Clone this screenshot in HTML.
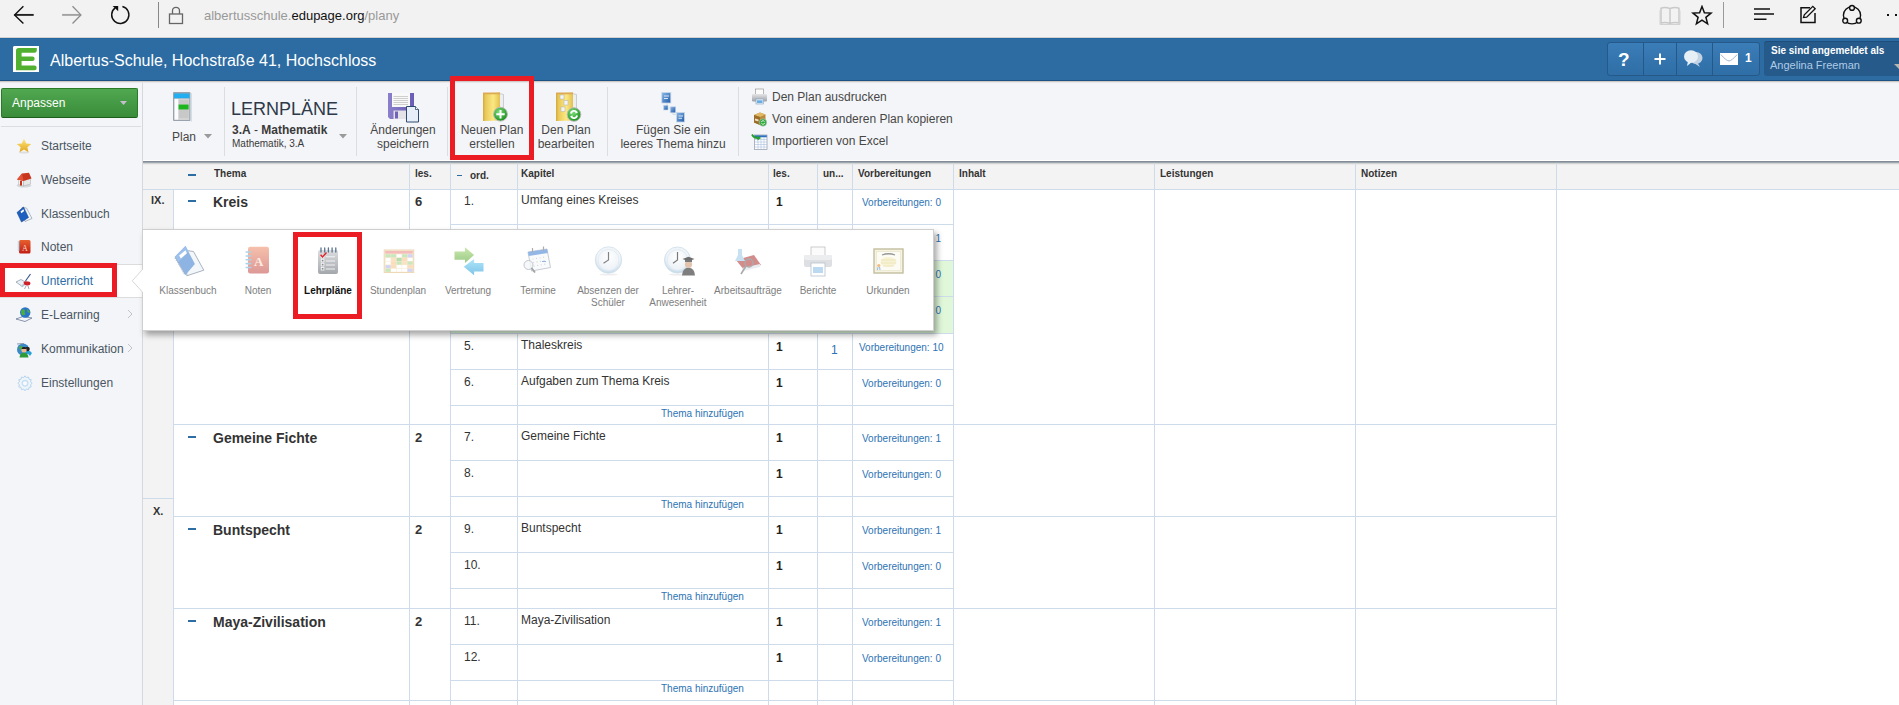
<!DOCTYPE html><html><head><meta charset="utf-8"><style>
html,body{margin:0;padding:0;}
body{width:1899px;height:705px;overflow:hidden;position:relative;background:#fff;font-family:"Liberation Sans",sans-serif;}
div{box-sizing:border-box;}
.t{position:absolute;white-space:nowrap;line-height:1;}
</style></head><body>
<div style="position:absolute;left:0px;top:0px;width:1899px;height:37px;background:#f2f2f2;"></div>
<svg style="position:absolute;left:12px;top:5px" width="24" height="22" viewBox="0 0 24 22"><path d="M2.5 9.9H21.7" stroke="#222" stroke-width="1.9"/><path d="M11.4 1.2L2.6 9.9L11.4 18.5" fill="none" stroke="#111" stroke-width="1.4"/></svg>
<svg style="position:absolute;left:60px;top:5px" width="24" height="22" viewBox="0 0 24 22"><path d="M2.1 9.9H20.5" stroke="#a2a2a2" stroke-width="1.9"/><path d="M12.5 1.2L20.9 9.9L12.5 18.5" fill="none" stroke="#8c8c8c" stroke-width="1.3"/></svg>
<svg style="position:absolute;left:109px;top:4px" width="22" height="22" viewBox="0 0 22 22"><path d="M13.4 2.5A8.6 8.6 0 1 1 6.2 3.9" fill="none" stroke="#111" stroke-width="1.45"/><path d="M3.6 2.1H9.2V7.2Z" fill="#111"/></svg>
<div style="position:absolute;left:158px;top:2px;width:1px;height:26px;background:#888;"></div>
<svg style="position:absolute;left:168px;top:5px" width="17" height="20" viewBox="0 0 17 20"><rect x="1.5" y="9" width="13" height="9.5" fill="none" stroke="#666" stroke-width="1.3"/><path d="M4.5 9V5.8a3.5 3.5 0 0 1 7 0V9" fill="none" stroke="#666" stroke-width="1.3"/></svg>
<div style="position:absolute;left:204px;top:8px;white-space:nowrap;font-size:13px;line-height:15px;"><span style="color:#999">albertusschule.</span><span style="color:#111">edupage.org</span><span style="color:#999">/plany</span></div>
<svg style="position:absolute;left:1659px;top:5px" width="22" height="21" viewBox="0 0 22 21"><path d="M2 3.2Q6 1.8 11 3.5Q16 1.8 20 3.2V18Q16 16.8 11 18.3Q6 16.8 2 18Z M11 3.5V18.3" fill="none" stroke="#c9c9c9" stroke-width="1.5"/><path d="M1 5.5V19.5H21V5.5" fill="none" stroke="#d2d2d2" stroke-width="1"/></svg>
<svg style="position:absolute;left:1691px;top:5px" width="22" height="21" viewBox="0 0 22 21"><path d="M11 1.5L13.4 7.8L20 8.1L14.9 12.3L16.6 18.9L11 15.2L5.4 18.9L7.1 12.3L2 8.1L8.6 7.8Z" fill="none" stroke="#111" stroke-width="1.5" stroke-linejoin="miter"/></svg>
<div style="position:absolute;left:1723px;top:2px;width:1px;height:26px;background:#999;"></div>
<svg style="position:absolute;left:1753px;top:6px" width="22" height="16" viewBox="0 0 22 16"><path d="M1 3H17 M1 8H21 M1 13.2H13.5" fill="none" stroke="#111" stroke-width="1.4"/></svg>
<svg style="position:absolute;left:1799px;top:5px" width="19" height="19" viewBox="0 0 19 19"><path d="M11 2.8H2V17.5H16V8" fill="none" stroke="#111" stroke-width="1.5"/><path d="M4.5 12.5L5.3 9.8L13.8 1.3L16.2 3.7L7.7 12.2Z" fill="none" stroke="#111" stroke-width="1.3"/></svg>
<svg style="position:absolute;left:1840px;top:3px" width="24" height="24" viewBox="0 0 24 24"><circle cx="12" cy="12.3" r="8.6" fill="none" stroke="#111" stroke-width="1.4"/><circle cx="12" cy="4.9" r="2.4" fill="#f2f2f2" stroke="#111" stroke-width="1.4"/><circle cx="5.2" cy="17.7" r="2.4" fill="#f2f2f2" stroke="#111" stroke-width="1.4"/><circle cx="18.8" cy="17.7" r="2.4" fill="#f2f2f2" stroke="#111" stroke-width="1.4"/></svg>
<div style="position:absolute;left:1887px;top:14px;width:2px;height:2px;background:#111;"></div>
<div style="position:absolute;left:1895px;top:14px;width:2px;height:2px;background:#111;"></div>
<div style="position:absolute;left:0px;top:38px;width:1899px;height:43px;background:#2c6ca2;border-bottom:1px solid #1b5082;"></div>
<div style="position:absolute;left:0px;top:37px;width:1899px;height:1px;background:#d4d0cc;"></div>
<div style="position:absolute;left:0px;top:38px;width:1899px;height:1px;background:#2467a1;"></div>
<svg style="position:absolute;left:13px;top:46px" width="26" height="26" viewBox="0 0 26 26"><path d="M1 0H26V26H0V1Z" fill="#fff"/><path d="M5.5 2H23.8V4.4A2.4 2.4 0 0 1 21.4 6.8H8.6V10.5H19.4A2.25 2.25 0 0 1 19.4 15H8.6V19.6H21.4A2.3 2.3 0 0 1 21.4 24.2H3V4.5A2.5 2.5 0 0 1 5.5 2Z" fill="#52b030"/></svg>
<div style="position:absolute;left:50px;top:52px;white-space:nowrap;font-size:16px;line-height:18px;color:#fff;">Albertus-Schule, Hochstraße 41, Hochschloss</div>
<div style="position:absolute;left:1607px;top:42px;width:153px;height:34px;background:linear-gradient(#3b7db8,#2f6ea6);border:1px solid #25598a;border-radius:3px;"></div>
<div style="position:absolute;left:1643px;top:43px;width:1px;height:32px;background:#245888;"></div>
<div style="position:absolute;left:1676px;top:43px;width:1px;height:32px;background:#245888;"></div>
<div style="position:absolute;left:1712px;top:43px;width:1px;height:32px;background:#245888;"></div>
<div style="position:absolute;left:1618px;top:49px;white-space:nowrap;font-size:19px;font-weight:bold;color:#fff;line-height:22px;">?</div>
<svg style="position:absolute;left:1654px;top:53px" width="12" height="12" viewBox="0 0 12 12"><path d="M6 0.5V11.5 M0.5 6H11.5" stroke="#fff" stroke-width="2"/></svg>
<svg style="position:absolute;left:1683px;top:49px" width="21" height="20" viewBox="0 0 21 20"><ellipse cx="13" cy="9" rx="6.5" ry="6" fill="#c3d3e4"/><path d="M14 13L17 18L11 14Z" fill="#c3d3e4"/><ellipse cx="8" cy="7.5" rx="7" ry="6.3" fill="#e6eef6"/><path d="M5 12L4 17L9 13Z" fill="#e6eef6"/></svg>
<svg style="position:absolute;left:1720px;top:53px" width="18" height="12" viewBox="0 0 18 12"><rect x="0" y="0" width="18" height="12" fill="#fff"/><path d="M0.8 1.5Q6 7.5 9 8Q12 7.5 17.2 1.5" fill="none" stroke="#8fb0d0" stroke-width="0.9"/></svg>
<div style="position:absolute;left:1745px;top:52px;white-space:nowrap;font-size:12px;font-weight:bold;color:#fff;line-height:12px;">1</div>
<div style="position:absolute;left:1764px;top:41px;width:140px;height:35px;background:#255a8b;border-top:1px solid #1d4e7c;border-radius:3px;"></div>
<div style="position:absolute;left:1771px;top:45px;white-space:nowrap;font-size:10px;font-weight:bold;color:#fff;line-height:12px;">Sie sind angemeldet als</div>
<div style="position:absolute;left:1770px;top:59px;white-space:nowrap;font-size:11px;color:#afcbe6;line-height:13px;">Angelina Freeman</div>
<svg style="position:absolute;left:1894px;top:64px" width="10" height="6" viewBox="0 0 10 6"><path d="M0 0H10L5 5Z" fill="#b4b4b0"/></svg>
<div style="position:absolute;left:0px;top:81px;width:143px;height:624px;background:#f4f5f8;border-right:1px solid #d6d7da;"></div>
<div style="position:absolute;left:1px;top:88px;width:137px;height:30px;background:linear-gradient(#50a850,#3a8c3a);border:1px solid #2a7a2a;border-bottom-color:#1a5e1a;border-radius:2px;"></div>
<div style="position:absolute;left:12px;top:96px;white-space:nowrap;font-size:12px;color:#fff;line-height:14px;">Anpassen</div>
<svg style="position:absolute;left:120px;top:101px" width="7" height="4" viewBox="0 0 7 4"><path d="M0 0H7L3.5 4Z" fill="#c6bece"/></svg>
<div style="position:absolute;left:1px;top:126px;width:140px;height:1px;background:#dcdde2;"></div>
<div style="position:absolute;left:143px;top:81px;width:1756px;height:79px;background:#f4f5f8;"></div>
<div style="position:absolute;left:143px;top:160px;width:1756px;height:1px;background:#fff;"></div>
<div style="position:absolute;left:0px;top:81px;width:1899px;height:1px;background:#ccc9c7;"></div>
<div style="position:absolute;left:0px;top:82px;width:1899px;height:1px;background:#e7e7e9;"></div>
<div style="position:absolute;left:143px;top:161px;width:1756px;height:1px;background:#838b95;"></div>
<div style="position:absolute;left:143px;top:162px;width:1756px;height:1px;background:#9ba7b1;"></div>
<div style="position:absolute;left:41px;top:139px;white-space:nowrap;font-size:12px;line-height:14px;color:#4a5563;">Startseite</div>
<div style="position:absolute;left:41px;top:173px;white-space:nowrap;font-size:12px;line-height:14px;color:#4a5563;">Webseite</div>
<div style="position:absolute;left:41px;top:207px;white-space:nowrap;font-size:12px;line-height:14px;color:#4a5563;">Klassenbuch</div>
<div style="position:absolute;left:41px;top:240px;white-space:nowrap;font-size:12px;line-height:14px;color:#4a5563;">Noten</div>
<div style="position:absolute;left:0px;top:264px;width:142px;height:34px;background:#fff;border-top:1px solid #dcdcdc;border-bottom:1px solid #dcdcdc;"></div>
<div style="position:absolute;left:41px;top:274px;white-space:nowrap;font-size:12px;line-height:14px;color:#2e6da4;">Unterricht</div>
<div style="position:absolute;left:41px;top:308px;white-space:nowrap;font-size:12px;line-height:14px;color:#4a5563;">E-Learning</div>
<svg style="position:absolute;left:127px;top:309px" width="6" height="10" viewBox="0 0 6 10"><path d="M1 1L5 5L1 9" fill="none" stroke="#c0c4ca" stroke-width="1"/></svg>
<div style="position:absolute;left:41px;top:342px;white-space:nowrap;font-size:12px;line-height:14px;color:#4a5563;">Kommunikation</div>
<svg style="position:absolute;left:127px;top:343px" width="6" height="10" viewBox="0 0 6 10"><path d="M1 1L5 5L1 9" fill="none" stroke="#c0c4ca" stroke-width="1"/></svg>
<div style="position:absolute;left:41px;top:376px;white-space:nowrap;font-size:12px;line-height:14px;color:#4a5563;">Einstellungen</div>
<svg style="position:absolute;left:16px;top:138px" width="16" height="16" viewBox="0 0 16 16"><defs><linearGradient id="st" x1="0" y1="0" x2="0" y2="1"><stop offset="0" stop-color="#fde680"/><stop offset="1" stop-color="#e2a51a"/></linearGradient></defs><ellipse cx="8" cy="14.5" rx="5" ry="1" fill="#ddd"/><path d="M8 0.8L10.2 5.4L15.2 5.9L11.4 9.2L12.5 14.2L8 11.6L3.5 14.2L4.6 9.2L0.8 5.9L5.8 5.4Z" fill="url(#st)"/></svg>
<svg style="position:absolute;left:16px;top:172px" width="16" height="16" viewBox="0 0 16 16"><ellipse cx="8" cy="13.5" rx="7.5" ry="2" fill="#d4d8dc"/><path d="M2.5 7L7.5 8.5V14L2.5 12.5Z" fill="#f7f7f7" stroke="#999" stroke-width="0.4"/><path d="M7.5 8.5L14.5 6.5V12L7.5 14Z" fill="#e6e6e6" stroke="#999" stroke-width="0.4"/><path d="M1 7.5L6 1.5L13 0.8L15.5 6.5L7.5 9Z" fill="#c9361f"/><path d="M1 7.5L6 1.5L7.5 9Z" fill="#e25238"/><rect x="4" y="9" width="2" height="4.5" fill="#c8301a"/></svg>
<svg style="position:absolute;left:16px;top:206px" width="17" height="17" viewBox="0 0 17 17"><path d="M6 1.5L10.5 2L16 12.5L9 15.5Z" fill="#f2f6fa" stroke="#7f8fa0" stroke-width="0.6"/><path d="M1 6.5L7.5 1L12.5 11.5L5.5 16Z" fill="#1f5fc0" stroke="#174a96" stroke-width="0.6"/><path d="M4.5 5.5L7.3 3.3L8.2 5L5.4 7.2Z" fill="#fff"/></svg>
<svg style="position:absolute;left:17px;top:239px" width="14" height="16" viewBox="0 0 14 16"><defs><linearGradient id="nt" x1="0" y1="0" x2="0" y2="1"><stop offset="0" stop-color="#e8602e"/><stop offset="1" stop-color="#c21e14"/></linearGradient></defs><rect x="2" y="1" width="11.5" height="13.5" rx="1.5" fill="url(#nt)"/><path d="M0.8 3H3M0.8 5H3M0.8 7H3M0.8 9H3M0.8 11H3" stroke="#8ab0cc" stroke-width="0.9"/><text x="8" y="11.5" font-size="8" text-anchor="middle" fill="#f7d8c8" font-family="Liberation Serif">A</text></svg>
<svg style="position:absolute;left:15px;top:273px" width="18" height="17" viewBox="0 0 18 17"><path d="M1 9L6 6.5L11 9.5L6.5 13Z" fill="#eaf2f8" stroke="#6f8190" stroke-width="0.6"/><path d="M6.5 13L11 9.5L11.5 11L7 14.5Z" fill="#b8c4d0"/><path d="M8.5 9.5Q10 7.5 12.5 8.5Q15.5 8 15.5 10.5Q15 13 12 12.5Q9 12.5 8.5 9.5Z" fill="#d0202a"/><path d="M10.5 8L15.5 1" stroke="#3a5a90" stroke-width="1.2"/><path d="M11 13L9.5 16M13 13L14 16" stroke="#8a96a6" stroke-width="0.8"/></svg>
<svg style="position:absolute;left:15px;top:306px" width="18" height="17" viewBox="0 0 18 17"><path d="M1 13L8 10.5L17 12L10 15.5Z" fill="#f4f6f8" stroke="#5a6a8a" stroke-width="0.7"/><circle cx="10.2" cy="6.5" r="5.2" fill="#2a74c8"/><path d="M6.5 4Q8.5 2.5 10 4.5Q9 6.5 10.5 8Q9 10 7 9Q5.5 6.5 6.5 4Z M12 3Q14.5 4 15 6.5Q13.5 7 12.5 6Z" fill="#4cae3c"/></svg>
<svg style="position:absolute;left:16px;top:342px" width="17" height="16" viewBox="0 0 17 16"><circle cx="7" cy="7.5" r="6" fill="#3a88c8"/><path d="M3 5Q5 3 7 5Q6 8 4 8Z" fill="#4cae3c"/><path d="M1 2L8 1.5" stroke="#8a9aaa" stroke-width="1"/><path d="M10 9Q14 8 16 11L14 14Q12 11 10 12Z" fill="#28a0d8"/><circle cx="11.5" cy="7" r="2.3" fill="#222"/><circle cx="8" cy="8" r="2.6" fill="#f0b890"/><path d="M5.5 7Q6 4.5 8 5Q10 4.5 10.5 7Z" fill="#222"/><path d="M3.5 15.5Q4 10.5 8 10.8Q12 10.5 12.5 15.5Z" fill="#2e9a3a"/></svg>
<svg style="position:absolute;left:17px;top:375px" width="16" height="16" viewBox="0 0 16 16"><path d="M8 0.8L9.3 2.6L11.5 2L12 4.2L14.2 4.7L13.5 6.9L15.2 8.3L13.5 9.7L14.2 11.9L12 12.4L11.5 14.6L9.3 14L8 15.8L6.7 14L4.5 14.6L4 12.4L1.8 11.9L2.5 9.7L0.8 8.3L2.5 6.9L1.8 4.7L4 4.2L4.5 2L6.7 2.6Z" fill="#eef5fb" stroke="#b6d4ee" stroke-width="1"/><circle cx="8" cy="8.3" r="2.8" fill="#f7fbff" stroke="#c8dff2" stroke-width="1.4"/></svg>
<div style="position:absolute;left:0px;top:263px;width:117px;height:34px;border:5px solid #ec1c24;"></div>
<svg style="position:absolute;left:172px;top:91px" width="20" height="31" viewBox="0 0 20 31"><rect x="1" y="1" width="17.5" height="29" rx="1" fill="#9aa3ad"/><rect x="2" y="2.5" width="15.5" height="5" fill="#22aef0"/><rect x="2.3" y="7.5" width="15" height="21.5" fill="#d3d3d3"/><rect x="2.6" y="8" width="3.6" height="20.5" fill="#fafcff"/><path d="M7 10H16.5M7 12H16.5M7 20H16.5M7 22H16.5M7 24H16.5M7 26H16.5" stroke="#b5b5b5" stroke-width="0.7"/><rect x="6.6" y="13.5" width="10" height="5" fill="#1db51d"/><rect x="18.5" y="2" width="1.2" height="28.5" fill="#c8d4e0"/></svg>
<div style="position:absolute;left:172px;top:130px;white-space:nowrap;font-size:12px;line-height:14px;color:#474747;">Plan</div>
<svg style="position:absolute;left:204px;top:134px" width="8" height="5" viewBox="0 0 8 5"><path d="M0 0H8L4 4.5Z" fill="#9a9a9a"/></svg>
<div style="position:absolute;left:224px;top:87px;width:1px;height:69px;background:#dcdde0;"></div>
<div style="position:absolute;left:231px;top:99px;white-space:nowrap;font-size:18px;line-height:20px;color:#2c3a4a;">LERNPLÄNE</div>
<div style="position:absolute;left:232px;top:123px;white-space:nowrap;font-size:12px;line-height:14px;color:#3a3a3a;"><b>3.A</b> - <b>Mathematik</b></div>
<div style="position:absolute;left:232px;top:138px;white-space:nowrap;font-size:10px;line-height:11px;color:#3a3a3a;">Mathematik, 3.A</div>
<svg style="position:absolute;left:339px;top:134px" width="8" height="5" viewBox="0 0 8 5"><path d="M0 0H8L4 4.5Z" fill="#9a9a9a"/></svg>
<div style="position:absolute;left:356px;top:87px;width:1px;height:69px;background:#dcdde0;"></div>
<svg style="position:absolute;left:387px;top:92px" width="33" height="31" viewBox="0 0 33 31"><defs><linearGradient id="fp" x1="0" x2="1"><stop offset="0" stop-color="#8a7fcc"/><stop offset="1" stop-color="#6a5cb4"/></linearGradient></defs><path d="M1 1H27V27H3L1 25Z" fill="url(#fp)"/><rect x="5" y="1" width="18" height="14" fill="#f8f8f8"/><path d="M6.5 4.5H21M6.5 6.5H21M6.5 8.5H21M6.5 10.5H21M6.5 12.5H21" stroke="#c8c8c8" stroke-width="0.9"/><rect x="6.5" y="18.5" width="13" height="8.5" fill="#e4e2e6"/><rect x="8" y="19.5" width="3" height="7" fill="#7064b8"/><path d="M19.5 14.5H28.5L31.5 17.5V30H19.5Z" fill="#e8eef8" stroke="#2e4a6e" stroke-width="1"/><path d="M28.5 14.5V17.5H31.5" fill="#fff" stroke="#2e4a6e" stroke-width="0.8"/></svg>
<div style="position:absolute;left:367px;top:123px;white-space:nowrap;font-size:12px;line-height:14px;color:#474747;text-align:center;width:72px;">Änderungen<br>speichern</div>
<div style="position:absolute;left:447px;top:87px;width:1px;height:69px;background:#dcdde0;"></div>
<svg style="position:absolute;left:482px;top:91px" width="27" height="32" viewBox="0 0 27 32"><defs><linearGradient id="fo" x1="0" x2="1"><stop offset="0" stop-color="#d3a93c"/><stop offset="0.15" stop-color="#e9c95a"/><stop offset="0.6" stop-color="#fbe882"/><stop offset="1" stop-color="#e2c050"/></linearGradient><radialGradient id="gc" cx="0.4" cy="0.35" r="0.7"><stop offset="0" stop-color="#7ee07a"/><stop offset="1" stop-color="#138a16"/></radialGradient></defs><path d="M17 2.5L21.5 3.5V27L17.5 28Z" fill="#eceef0" stroke="#b8bcc2" stroke-width="0.7"/><path d="M1 2.5L18 1.5V29.5L1 30Z" fill="url(#fo)"/><rect x="1" y="1.5" width="17" height="1.8" fill="#dcaa55"/><circle cx="18.5" cy="23.2" r="6.9" fill="url(#gc)" stroke="#b9b9b9" stroke-width="1"/><path d="M18.5 19V27.4M14.3 23.2H22.7" stroke="#fff" stroke-width="2"/></svg>
<div style="position:absolute;left:456px;top:123px;white-space:nowrap;font-size:12px;line-height:14px;color:#474747;text-align:center;width:72px;">Neuen Plan<br>erstellen</div>
<svg style="position:absolute;left:555px;top:91px" width="27" height="32" viewBox="0 0 27 32"><path d="M17 2.5L21.5 3.5V27L17.5 28Z" fill="#eceef0" stroke="#b8bcc2" stroke-width="0.7"/><path d="M1 2.5L18 1.5V29.5L1 30Z" fill="url(#fo)"/><rect x="1" y="1.5" width="17" height="1.8" fill="#dcaa55"/><rect x="5" y="4" width="4" height="4" fill="#f4f4f4" stroke="#b0b0b0" stroke-width="0.5"/><rect x="9" y="9.5" width="4" height="4.5" fill="#f4f4f4" stroke="#b0b0b0" stroke-width="0.5"/><rect x="6" y="16" width="4" height="4.5" fill="#f4f4f4" stroke="#b0b0b0" stroke-width="0.5"/><circle cx="19" cy="23.5" r="6.8" fill="url(#gc)" stroke="#b9b9b9" stroke-width="1"/><path d="M15.8 22.5A3.4 3.4 0 0 1 21.8 21.2 M22.2 24.5A3.4 3.4 0 0 1 16.2 25.8" fill="none" stroke="#fff" stroke-width="1.8"/><path d="M20.5 19.8L23 21.8L20.3 22.6Z M17.5 27.2L15 25.2L17.7 24.4Z" fill="#fff"/></svg>
<div style="position:absolute;left:530px;top:123px;white-space:nowrap;font-size:12px;line-height:14px;color:#474747;text-align:center;width:72px;">Den Plan<br>bearbeiten</div>
<div style="position:absolute;left:607px;top:87px;width:1px;height:69px;background:#dcdde0;"></div>
<svg style="position:absolute;left:660px;top:91px" width="26" height="32" viewBox="0 0 26 32"><defs><linearGradient id="fq" x1="0" y1="0" x2="1" y2="1"><stop offset="0" stop-color="#8ab8e8"/><stop offset="1" stop-color="#1f5aa8"/></linearGradient></defs><path d="M7 12V15 M8 17H10 M13 22V23.5H16" fill="none" stroke="#d0d8e0" stroke-width="0.8"/><rect x="1.8" y="1.5" width="9" height="10.5" fill="url(#fq)" stroke="#c8d8e8" stroke-width="0.8"/><rect x="3.5" y="14.2" width="4.5" height="4.8" fill="url(#fq)" stroke="#c8d8e8" stroke-width="0.6"/><rect x="10.2" y="15.8" width="5.5" height="6" fill="url(#fq)" stroke="#c8d8e8" stroke-width="0.6"/><rect x="16.5" y="21.5" width="8" height="9.5" fill="url(#fq)" stroke="#c8d8e8" stroke-width="0.8"/><path d="M4 5H9M4 7.5H8" stroke="#e8f0f8" stroke-width="0.9"/><path d="M18.5 25H23M18.5 27.3H22" stroke="#e8f0f8" stroke-width="0.9"/></svg>
<div style="position:absolute;left:612px;top:123px;white-space:nowrap;font-size:12px;line-height:14px;color:#474747;text-align:center;width:122px;">Fügen Sie ein<br>leeres Thema hinzu</div>
<div style="position:absolute;left:738px;top:87px;width:1px;height:69px;background:#dcdde0;"></div>
<svg style="position:absolute;left:751px;top:88px" width="17" height="17" viewBox="0 0 17 17"><rect x="4.5" y="1" width="8" height="6" fill="#fbfbfb" stroke="#9a9a9a" stroke-width="0.7"/><defs><linearGradient id="pr" x1="0" y1="0" x2="0" y2="1"><stop offset="0" stop-color="#e4e4e6"/><stop offset="1" stop-color="#9da2a8"/></linearGradient></defs><rect x="1" y="6" width="15" height="7.5" rx="1.2" fill="url(#pr)"/><rect x="5" y="11" width="7.5" height="5" fill="#e6f0fa" stroke="#7f9fbf" stroke-width="0.6"/><rect x="6" y="12.3" width="5.5" height="2.7" fill="#6aaee0"/></svg>
<div style="position:absolute;left:772px;top:90px;white-space:nowrap;font-size:12px;line-height:14px;color:#474747;">Den Plan ausdrucken</div>
<svg style="position:absolute;left:752px;top:111px" width="16" height="16" viewBox="0 0 16 16"><path d="M2 4L8 1.5L13.5 3.5V11L8 14L2 11.5Z" fill="#b88a3a"/><path d="M2 4L8 6L13.5 3.5L8 1.5Z" fill="#e0b868"/><path d="M8 6V14L2 11.5V4Z" fill="#9a6e2a"/><path d="M3 7.5L6.5 8.5V10.5L3 9.5Z" fill="#f0e0c0"/><circle cx="11" cy="11.5" r="3.7" fill="#2ea83a" stroke="#c8c8c8" stroke-width="0.6"/><path d="M9.3 11.2A1.8 1.8 0 0 1 12.5 10.5M12.7 11.8A1.8 1.8 0 0 1 9.5 12.5" fill="none" stroke="#fff" stroke-width="0.9"/></svg>
<div style="position:absolute;left:772px;top:112px;white-space:nowrap;font-size:12px;line-height:14px;color:#474747;">Von einem anderen Plan kopieren</div>
<svg style="position:absolute;left:751px;top:133px" width="17" height="17" viewBox="0 0 17 17"><rect x="3.5" y="2" width="12.5" height="14.5" fill="#fff" stroke="#8a96a8" stroke-width="0.7"/><rect x="3.8" y="2.3" width="12" height="2" fill="#2f6fc0"/><path d="M4 6.5H16M4 9H16M4 11.5H16M4 14H16M7 4.3V16.3M10 4.3V16.3M13 4.3V16.3" stroke="#a8c0e0" stroke-width="0.6"/><path d="M1 1.5Q3 5.5 7.5 5" fill="none" stroke="#22a02e" stroke-width="1.8"/><path d="M6.5 2.5L10 5L6.5 7.5Z" fill="#22a02e"/></svg>
<div style="position:absolute;left:772px;top:134px;white-space:nowrap;font-size:12px;line-height:14px;color:#474747;">Importieren von Excel</div>
<div style="position:absolute;left:143px;top:163px;width:1756px;height:26px;background:#f3f3f3;"></div>
<div style="position:absolute;left:143px;top:163px;width:1756px;height:1px;background:#d3d3d3;"></div>
<div style="position:absolute;left:143px;top:164px;width:1756px;height:1px;background:#ebebeb;"></div>
<div style="position:absolute;left:143px;top:189px;width:1413px;height:1px;background:#cddbea;"></div>
<div style="position:absolute;left:1556px;top:189px;width:343px;height:1px;background:#cddbea;"></div>
<div style="position:absolute;left:409px;top:163px;width:1px;height:26px;background:#cddbea;"></div>
<div style="position:absolute;left:450px;top:163px;width:1px;height:26px;background:#cddbea;"></div>
<div style="position:absolute;left:517px;top:163px;width:1px;height:26px;background:#cddbea;"></div>
<div style="position:absolute;left:768px;top:163px;width:1px;height:26px;background:#cddbea;"></div>
<div style="position:absolute;left:817px;top:163px;width:1px;height:26px;background:#cddbea;"></div>
<div style="position:absolute;left:852px;top:163px;width:1px;height:26px;background:#cddbea;"></div>
<div style="position:absolute;left:953px;top:163px;width:1px;height:26px;background:#cddbea;"></div>
<div style="position:absolute;left:1154px;top:163px;width:1px;height:26px;background:#cddbea;"></div>
<div style="position:absolute;left:1355px;top:163px;width:1px;height:26px;background:#cddbea;"></div>
<div style="position:absolute;left:1556px;top:163px;width:1px;height:26px;background:#cddbea;"></div>
<div style="position:absolute;left:188px;top:174px;width:8px;height:2px;background:#2e6da4;"></div>
<div style="position:absolute;left:214px;top:168px;white-space:nowrap;font-size:10px;font-weight:bold;line-height:12px;color:#333;">Thema</div>
<div style="position:absolute;left:415px;top:168px;white-space:nowrap;font-size:10px;font-weight:bold;line-height:12px;color:#333;">les.</div>
<div style="position:absolute;left:457px;top:175px;width:5px;height:1px;background:#2e6da4;"></div>
<div style="position:absolute;left:470px;top:170px;white-space:nowrap;font-size:10px;font-weight:bold;line-height:12px;color:#333;">ord.</div>
<div style="position:absolute;left:521px;top:168px;white-space:nowrap;font-size:10px;font-weight:bold;line-height:12px;color:#333;">Kapitel</div>
<div style="position:absolute;left:773px;top:168px;white-space:nowrap;font-size:10px;font-weight:bold;line-height:12px;color:#333;">les.</div>
<div style="position:absolute;left:823px;top:168px;white-space:nowrap;font-size:10px;font-weight:bold;line-height:12px;color:#333;">un...</div>
<div style="position:absolute;left:858px;top:168px;white-space:nowrap;font-size:10px;font-weight:bold;line-height:12px;color:#333;">Vorbereitungen</div>
<div style="position:absolute;left:959px;top:168px;white-space:nowrap;font-size:10px;font-weight:bold;line-height:12px;color:#333;">Inhalt</div>
<div style="position:absolute;left:1160px;top:168px;white-space:nowrap;font-size:10px;font-weight:bold;line-height:12px;color:#333;">Leistungen</div>
<div style="position:absolute;left:1361px;top:168px;white-space:nowrap;font-size:10px;font-weight:bold;line-height:12px;color:#333;">Notizen</div>
<div style="position:absolute;left:143px;top:190px;width:30px;height:515px;background:#f3f3f3;"></div>
<div style="position:absolute;left:173px;top:190px;width:1px;height:515px;background:#cddbea;"></div>
<div style="position:absolute;left:143px;top:498px;width:30px;height:1px;background:#cddbea;"></div>
<div style="position:absolute;left:151px;top:194px;white-space:nowrap;font-size:11px;font-weight:bold;line-height:13px;color:#333;">IX.</div>
<div style="position:absolute;left:153px;top:505px;white-space:nowrap;font-size:11px;font-weight:bold;line-height:13px;color:#333;">X.</div>
<div style="position:absolute;left:409px;top:190px;width:1px;height:515px;background:#cddbea;"></div>
<div style="position:absolute;left:450px;top:190px;width:1px;height:515px;background:#cddbea;"></div>
<div style="position:absolute;left:517px;top:190px;width:1px;height:515px;background:#cddbea;"></div>
<div style="position:absolute;left:768px;top:190px;width:1px;height:515px;background:#cddbea;"></div>
<div style="position:absolute;left:817px;top:190px;width:1px;height:515px;background:#cddbea;"></div>
<div style="position:absolute;left:852px;top:190px;width:1px;height:515px;background:#cddbea;"></div>
<div style="position:absolute;left:953px;top:190px;width:1px;height:515px;background:#cddbea;"></div>
<div style="position:absolute;left:1154px;top:190px;width:1px;height:515px;background:#cddbea;"></div>
<div style="position:absolute;left:1355px;top:190px;width:1px;height:515px;background:#cddbea;"></div>
<div style="position:absolute;left:1556px;top:190px;width:1px;height:515px;background:#cddbea;"></div>
<div style="position:absolute;left:173px;top:424px;width:1383px;height:1px;background:#cddbea;"></div>
<div style="position:absolute;left:188px;top:200px;width:8px;height:2px;background:#2e6da4;"></div>
<div style="position:absolute;left:213px;top:194px;white-space:nowrap;font-size:14px;font-weight:bold;line-height:16px;color:#333;">Kreis</div>
<div style="position:absolute;left:415px;top:194px;white-space:nowrap;font-size:13px;font-weight:bold;line-height:16px;color:#333;">6</div>
<div style="position:absolute;left:464px;top:194px;white-space:nowrap;font-size:12px;line-height:14px;color:#333;">1.</div>
<div style="position:absolute;left:521px;top:193px;white-space:nowrap;font-size:12px;line-height:14px;color:#333;">Umfang eines Kreises</div>
<div style="position:absolute;left:776px;top:195px;white-space:nowrap;font-size:12px;font-weight:bold;line-height:14px;color:#222;">1</div>
<div style="position:absolute;left:862px;top:197px;white-space:nowrap;font-size:10px;line-height:12px;color:#2e73b4;">Vorbereitungen: 0</div>
<div style="position:absolute;left:450px;top:224px;width:503px;height:1px;background:#cddbea;"></div>
<div style="position:absolute;left:464px;top:230px;white-space:nowrap;font-size:12px;line-height:14px;color:#333;">2.</div>
<div style="position:absolute;left:521px;top:229px;white-space:nowrap;font-size:12px;line-height:14px;color:#333;"></div>
<div style="position:absolute;left:776px;top:231px;white-space:nowrap;font-size:12px;font-weight:bold;line-height:14px;color:#222;">1</div>
<div style="position:absolute;left:862px;top:233px;white-space:nowrap;font-size:10px;line-height:12px;color:#2e73b4;">Vorbereitungen: 1</div>
<div style="position:absolute;left:450px;top:260px;width:503px;height:1px;background:#cddbea;"></div>
<div style="position:absolute;left:451px;top:261px;width:502px;height:35px;background:#e0f7da;"></div>
<div style="position:absolute;left:464px;top:266px;white-space:nowrap;font-size:12px;line-height:14px;color:#333;">3.</div>
<div style="position:absolute;left:521px;top:265px;white-space:nowrap;font-size:12px;line-height:14px;color:#333;"></div>
<div style="position:absolute;left:776px;top:267px;white-space:nowrap;font-size:12px;font-weight:bold;line-height:14px;color:#222;">1</div>
<div style="position:absolute;left:862px;top:269px;white-space:nowrap;font-size:10px;line-height:12px;color:#2e73b4;">Vorbereitungen: 0</div>
<div style="position:absolute;left:450px;top:296px;width:503px;height:1px;background:#cddbea;"></div>
<div style="position:absolute;left:451px;top:297px;width:502px;height:36px;background:#e0f7da;"></div>
<div style="position:absolute;left:464px;top:302px;white-space:nowrap;font-size:12px;line-height:14px;color:#333;">4.</div>
<div style="position:absolute;left:521px;top:301px;white-space:nowrap;font-size:12px;line-height:14px;color:#333;"></div>
<div style="position:absolute;left:776px;top:303px;white-space:nowrap;font-size:12px;font-weight:bold;line-height:14px;color:#222;">1</div>
<div style="position:absolute;left:862px;top:305px;white-space:nowrap;font-size:10px;line-height:12px;color:#2e73b4;">Vorbereitungen: 0</div>
<div style="position:absolute;left:450px;top:333px;width:503px;height:1px;background:#cddbea;"></div>
<div style="position:absolute;left:464px;top:339px;white-space:nowrap;font-size:12px;line-height:14px;color:#333;">5.</div>
<div style="position:absolute;left:521px;top:338px;white-space:nowrap;font-size:12px;line-height:14px;color:#333;">Thaleskreis</div>
<div style="position:absolute;left:776px;top:340px;white-space:nowrap;font-size:12px;font-weight:bold;line-height:14px;color:#222;">1</div>
<div style="position:absolute;left:831px;top:343px;white-space:nowrap;font-size:12px;line-height:14px;color:#2e73b4;">1</div>
<div style="position:absolute;left:859px;top:342px;white-space:nowrap;font-size:10px;line-height:12px;color:#2e73b4;">Vorbereitungen: 10</div>
<div style="position:absolute;left:450px;top:369px;width:503px;height:1px;background:#cddbea;"></div>
<div style="position:absolute;left:464px;top:375px;white-space:nowrap;font-size:12px;line-height:14px;color:#333;">6.</div>
<div style="position:absolute;left:521px;top:374px;white-space:nowrap;font-size:12px;line-height:14px;color:#333;">Aufgaben zum Thema Kreis</div>
<div style="position:absolute;left:776px;top:376px;white-space:nowrap;font-size:12px;font-weight:bold;line-height:14px;color:#222;">1</div>
<div style="position:absolute;left:862px;top:378px;white-space:nowrap;font-size:10px;line-height:12px;color:#2e73b4;">Vorbereitungen: 0</div>
<div style="position:absolute;left:450px;top:405px;width:503px;height:1px;background:#cddbea;"></div>
<div style="position:absolute;left:661px;top:408px;white-space:nowrap;font-size:10px;line-height:12px;color:#2e73b4;">Thema hinzufügen</div>
<div style="position:absolute;left:173px;top:516px;width:1383px;height:1px;background:#cddbea;"></div>
<div style="position:absolute;left:188px;top:436px;width:8px;height:2px;background:#2e6da4;"></div>
<div style="position:absolute;left:213px;top:430px;white-space:nowrap;font-size:14px;font-weight:bold;line-height:16px;color:#333;">Gemeine Fichte</div>
<div style="position:absolute;left:415px;top:430px;white-space:nowrap;font-size:13px;font-weight:bold;line-height:16px;color:#333;">2</div>
<div style="position:absolute;left:464px;top:430px;white-space:nowrap;font-size:12px;line-height:14px;color:#333;">7.</div>
<div style="position:absolute;left:521px;top:429px;white-space:nowrap;font-size:12px;line-height:14px;color:#333;">Gemeine Fichte</div>
<div style="position:absolute;left:776px;top:431px;white-space:nowrap;font-size:12px;font-weight:bold;line-height:14px;color:#222;">1</div>
<div style="position:absolute;left:862px;top:433px;white-space:nowrap;font-size:10px;line-height:12px;color:#2e73b4;">Vorbereitungen: 1</div>
<div style="position:absolute;left:450px;top:460px;width:503px;height:1px;background:#cddbea;"></div>
<div style="position:absolute;left:464px;top:466px;white-space:nowrap;font-size:12px;line-height:14px;color:#333;">8.</div>
<div style="position:absolute;left:521px;top:465px;white-space:nowrap;font-size:12px;line-height:14px;color:#333;"></div>
<div style="position:absolute;left:776px;top:467px;white-space:nowrap;font-size:12px;font-weight:bold;line-height:14px;color:#222;">1</div>
<div style="position:absolute;left:862px;top:469px;white-space:nowrap;font-size:10px;line-height:12px;color:#2e73b4;">Vorbereitungen: 0</div>
<div style="position:absolute;left:450px;top:496px;width:503px;height:1px;background:#cddbea;"></div>
<div style="position:absolute;left:661px;top:499px;white-space:nowrap;font-size:10px;line-height:12px;color:#2e73b4;">Thema hinzufügen</div>
<div style="position:absolute;left:173px;top:608px;width:1383px;height:1px;background:#cddbea;"></div>
<div style="position:absolute;left:188px;top:528px;width:8px;height:2px;background:#2e6da4;"></div>
<div style="position:absolute;left:213px;top:522px;white-space:nowrap;font-size:14px;font-weight:bold;line-height:16px;color:#333;">Buntspecht</div>
<div style="position:absolute;left:415px;top:522px;white-space:nowrap;font-size:13px;font-weight:bold;line-height:16px;color:#333;">2</div>
<div style="position:absolute;left:464px;top:522px;white-space:nowrap;font-size:12px;line-height:14px;color:#333;">9.</div>
<div style="position:absolute;left:521px;top:521px;white-space:nowrap;font-size:12px;line-height:14px;color:#333;">Buntspecht</div>
<div style="position:absolute;left:776px;top:523px;white-space:nowrap;font-size:12px;font-weight:bold;line-height:14px;color:#222;">1</div>
<div style="position:absolute;left:862px;top:525px;white-space:nowrap;font-size:10px;line-height:12px;color:#2e73b4;">Vorbereitungen: 1</div>
<div style="position:absolute;left:450px;top:552px;width:503px;height:1px;background:#cddbea;"></div>
<div style="position:absolute;left:464px;top:558px;white-space:nowrap;font-size:12px;line-height:14px;color:#333;">10.</div>
<div style="position:absolute;left:521px;top:557px;white-space:nowrap;font-size:12px;line-height:14px;color:#333;"></div>
<div style="position:absolute;left:776px;top:559px;white-space:nowrap;font-size:12px;font-weight:bold;line-height:14px;color:#222;">1</div>
<div style="position:absolute;left:862px;top:561px;white-space:nowrap;font-size:10px;line-height:12px;color:#2e73b4;">Vorbereitungen: 0</div>
<div style="position:absolute;left:450px;top:588px;width:503px;height:1px;background:#cddbea;"></div>
<div style="position:absolute;left:661px;top:591px;white-space:nowrap;font-size:10px;line-height:12px;color:#2e73b4;">Thema hinzufügen</div>
<div style="position:absolute;left:173px;top:700px;width:1383px;height:1px;background:#cddbea;"></div>
<div style="position:absolute;left:188px;top:620px;width:8px;height:2px;background:#2e6da4;"></div>
<div style="position:absolute;left:213px;top:614px;white-space:nowrap;font-size:14px;font-weight:bold;line-height:16px;color:#333;">Maya-Zivilisation</div>
<div style="position:absolute;left:415px;top:614px;white-space:nowrap;font-size:13px;font-weight:bold;line-height:16px;color:#333;">2</div>
<div style="position:absolute;left:464px;top:614px;white-space:nowrap;font-size:12px;line-height:14px;color:#333;">11.</div>
<div style="position:absolute;left:521px;top:613px;white-space:nowrap;font-size:12px;line-height:14px;color:#333;">Maya-Zivilisation</div>
<div style="position:absolute;left:776px;top:615px;white-space:nowrap;font-size:12px;font-weight:bold;line-height:14px;color:#222;">1</div>
<div style="position:absolute;left:862px;top:617px;white-space:nowrap;font-size:10px;line-height:12px;color:#2e73b4;">Vorbereitungen: 1</div>
<div style="position:absolute;left:450px;top:644px;width:503px;height:1px;background:#cddbea;"></div>
<div style="position:absolute;left:464px;top:650px;white-space:nowrap;font-size:12px;line-height:14px;color:#333;">12.</div>
<div style="position:absolute;left:521px;top:649px;white-space:nowrap;font-size:12px;line-height:14px;color:#333;"></div>
<div style="position:absolute;left:776px;top:651px;white-space:nowrap;font-size:12px;font-weight:bold;line-height:14px;color:#222;">1</div>
<div style="position:absolute;left:862px;top:653px;white-space:nowrap;font-size:10px;line-height:12px;color:#2e73b4;">Vorbereitungen: 0</div>
<div style="position:absolute;left:450px;top:680px;width:503px;height:1px;background:#cddbea;"></div>
<div style="position:absolute;left:661px;top:683px;white-space:nowrap;font-size:10px;line-height:12px;color:#2e73b4;">Thema hinzufügen</div>
<div style="position:absolute;left:142px;top:229px;width:792px;height:102px;background:#fff;border:1px solid #cfcfcf;box-shadow:3px 4px 6px rgba(0,0,0,0.35);"></div>
<svg style="position:absolute;left:131px;top:269px" width="14" height="24" viewBox="0 0 14 24"><path d="M11.5 0.5L1.2 11.8L11.5 23" fill="#fff" stroke="#d8d8d8" stroke-width="1"/><rect x="11" y="1" width="3" height="21.5" fill="#fff"/></svg>
<div style="position:absolute;left:138px;top:285px;white-space:nowrap;font-size:10px;line-height:12px;text-align:center;width:100px;color:#7e7e7e;">Klassenbuch</div>
<div style="position:absolute;left:208px;top:285px;white-space:nowrap;font-size:10px;line-height:12px;text-align:center;width:100px;color:#7e7e7e;">Noten</div>
<div style="position:absolute;left:278px;top:285px;white-space:nowrap;font-size:10px;line-height:12px;text-align:center;width:100px;font-weight:bold;color:#111;">Lehrpläne</div>
<div style="position:absolute;left:348px;top:285px;white-space:nowrap;font-size:10px;line-height:12px;text-align:center;width:100px;color:#7e7e7e;">Stundenplan</div>
<div style="position:absolute;left:418px;top:285px;white-space:nowrap;font-size:10px;line-height:12px;text-align:center;width:100px;color:#7e7e7e;">Vertretung</div>
<div style="position:absolute;left:488px;top:285px;white-space:nowrap;font-size:10px;line-height:12px;text-align:center;width:100px;color:#7e7e7e;">Termine</div>
<div style="position:absolute;left:558px;top:285px;white-space:nowrap;font-size:10px;line-height:12px;text-align:center;width:100px;color:#7e7e7e;">Absenzen der<br>Schüler</div>
<div style="position:absolute;left:628px;top:285px;white-space:nowrap;font-size:10px;line-height:12px;text-align:center;width:100px;color:#7e7e7e;">Lehrer-<br>Anwesenheit</div>
<div style="position:absolute;left:698px;top:285px;white-space:nowrap;font-size:10px;line-height:12px;text-align:center;width:100px;color:#7e7e7e;">Arbeitsaufträge</div>
<div style="position:absolute;left:768px;top:285px;white-space:nowrap;font-size:10px;line-height:12px;text-align:center;width:100px;color:#7e7e7e;">Berichte</div>
<div style="position:absolute;left:838px;top:285px;white-space:nowrap;font-size:10px;line-height:12px;text-align:center;width:100px;color:#7e7e7e;">Urkunden</div>
<div style="position:absolute;left:293px;top:232px;width:69px;height:87px;border:5px solid #ec1c24;"></div>
<div style="position:absolute;left:450px;top:76px;width:84px;height:84px;border:5px solid #ec1c24;"></div>
<svg style="position:absolute;left:173px;top:245px;opacity:0.7" width="32" height="32" viewBox="0 0 32 32"><path d="M13.5 5.5L20.5 6.5L30.8 25.2L13.8 30.8Z" fill="#eef4f8" stroke="#6a7a90" stroke-width="0.8"/><path d="M12.5 1.1L1.7 11.9L12.2 30.2L21.9 19.1Z" fill="#5f95d8"/><path d="M12.5 1.1L1.7 11.9L5 17.5L15.5 6.5Z" fill="#74a6e4"/><path d="M6.1 10.5L12.5 5.3L13.9 8.3L7.8 13.6Z" fill="#fff"/><path d="M2.2 12.8L11.8 29.3" stroke="#8a96a6" stroke-width="1.6" stroke-dasharray="1 1.2"/></svg>
<svg style="position:absolute;left:245px;top:245px;opacity:0.62" width="26" height="30" viewBox="0 0 26 30"><defs><linearGradient id="no" x1="0" y1="0" x2="0" y2="1"><stop offset="0" stop-color="#f09a78"/><stop offset="1" stop-color="#c85a58"/></linearGradient></defs><rect x="3" y="1.7" width="21" height="26.8" rx="2.2" fill="url(#no)"/><path d="M1.2 7H5.8M1.2 11H5.8M1.2 14.8H5.8M1.2 18.6H5.8M1.2 22.5H5.8" stroke="#7ab8dc" stroke-width="1.6" stroke-linecap="round"/><text x="13.8" y="20.5" font-size="13" font-weight="bold" text-anchor="middle" fill="#fbe2d2" font-family="Liberation Serif">A</text></svg>
<svg style="position:absolute;left:317px;top:247px;opacity:1" width="22" height="30" viewBox="0 0 22 30"><defs><linearGradient id="lp" x1="0" y1="0" x2="0" y2="1"><stop offset="0" stop-color="#dcdee0"/><stop offset="1" stop-color="#a4a8ad"/></linearGradient></defs><rect x="1" y="3" width="20" height="24" rx="2" fill="url(#lp)"/><path d="M4 1V5M7.7 1V5M11.4 1V5M15.1 1V5M18.8 1V5" stroke="#5a7390" stroke-width="1.3" stroke-linecap="round"/><g fill="none" stroke="#f4f4f4" stroke-width="0.9"><rect x="4.3" y="8.3" width="2.6" height="2.6"/><rect x="4.3" y="12.3" width="2.6" height="2.6"/><rect x="4.3" y="16.3" width="2.6" height="2.6"/><rect x="4.3" y="20.4" width="2.6" height="2.6"/></g><g fill="#8a8e94"><rect x="4.9" y="12.9" width="1.4" height="1.4"/><rect x="4.9" y="16.9" width="1.4" height="1.4"/><rect x="4.9" y="21" width="1.4" height="1.4"/></g><path d="M8.8 9.8H18M8.8 14H18M8.8 18H18M8.8 22H18" stroke="#f2f2f2" stroke-width="1.1"/><path d="M3.6 7.8L5.5 10L9.5 5.5" fill="none" stroke="#e0202a" stroke-width="1.4"/></svg>
<svg style="position:absolute;left:383px;top:249px;opacity:0.6" width="32" height="26" viewBox="0 0 32 26"><rect x="1.2" y="1" width="29.5" height="22.5" fill="#f2dcb4" stroke="#e4c088" stroke-width="1"/><rect x="2.2" y="2" width="27.5" height="2.6" fill="#ee8e8e"/><g><rect x="2.6" y="5.3" width="5" height="3.1" fill="#a6d890"/><rect x="8.1" y="5.3" width="5" height="3.1" fill="#a6d890"/><rect x="13.6" y="5.3" width="5" height="3.1" fill="#fff"/><rect x="19.1" y="5.3" width="5" height="3.1" fill="#a6d890"/><rect x="24.6" y="5.3" width="5" height="3.1" fill="#b4b8ee"/><rect x="2.6" y="8.9" width="5" height="3.1" fill="#fff"/><rect x="8.1" y="8.9" width="5" height="3.1" fill="#f8d0a0"/><rect x="13.6" y="8.9" width="5" height="3.1" fill="#88c878"/><rect x="19.1" y="8.9" width="5" height="3.1" fill="#f8c890"/><rect x="24.6" y="8.9" width="5" height="3.1" fill="#fff"/><rect x="2.6" y="12.5" width="5" height="3.1" fill="#fff"/><rect x="8.1" y="12.5" width="5" height="3.1" fill="#f8c890"/><rect x="13.6" y="12.5" width="5" height="3.1" fill="#a6d890"/><rect x="19.1" y="12.5" width="5" height="3.1" fill="#f8d0a0"/><rect x="24.6" y="12.5" width="5" height="3.1" fill="#a6d890"/><rect x="2.6" y="16.1" width="5" height="3.1" fill="#b4b8ee"/><rect x="8.1" y="16.1" width="5" height="3.1" fill="#f8c890"/><rect x="13.6" y="16.1" width="5" height="3.1" fill="#fff"/><rect x="19.1" y="16.1" width="5" height="3.1" fill="#fff"/><rect x="24.6" y="16.1" width="5" height="3.1" fill="#f8c890"/><rect x="2.6" y="19.7" width="5" height="3.1" fill="#a6d890"/><rect x="8.1" y="19.7" width="5" height="3.1" fill="#fff"/><rect x="13.6" y="19.7" width="5" height="3.1" fill="#fff"/><rect x="19.1" y="19.7" width="5" height="3.1" fill="#fff"/><rect x="24.6" y="19.7" width="5" height="3.1" fill="#b4b8ee"/></g></svg>
<svg style="position:absolute;left:454px;top:246px;opacity:0.6" width="31" height="31" viewBox="0 0 31 31"><defs><linearGradient id="vg" x1="0" y1="0" x2="0" y2="1"><stop offset="0" stop-color="#a8dc78"/><stop offset="1" stop-color="#5aa838"/></linearGradient><linearGradient id="vb" x1="0" y1="0" x2="0" y2="1"><stop offset="0" stop-color="#7ad6f8"/><stop offset="1" stop-color="#2a9ed8"/></linearGradient></defs><path d="M0.5 5.4H11V1.2L20.1 9L11 17.1V13.8H0.5Z" fill="url(#vg)"/><path d="M29.5 17.1H20.1V12.9L9.8 20.8L20.1 29.3V25.5H29.5Z" fill="url(#vb)"/></svg>
<svg style="position:absolute;left:523px;top:246px;opacity:0.6" width="30" height="29" viewBox="0 0 30 29"><path d="M5 6L24 3L27.5 21.5L8.5 25Z" fill="#f6f8fa" stroke="#8a96a6" stroke-width="0.8"/><path d="M5 6L24 3L24.8 7L5.8 10Z" fill="#4a88d8"/><path d="M9.5 2V6.5M20.5 0.5V5" stroke="#777" stroke-width="1.2"/><g fill="#b0b8c4"><circle cx="10" cy="13" r="0.6"/><circle cx="13.5" cy="12.4" r="0.6"/><circle cx="17" cy="11.8" r="0.6"/><circle cx="20.5" cy="11.2" r="0.6"/><circle cx="10.6" cy="16.5" r="0.6"/><circle cx="14.1" cy="15.9" r="0.6"/><circle cx="17.6" cy="15.3" r="0.6"/><circle cx="21.1" cy="14.7" r="0.6"/><circle cx="11.2" cy="20" r="0.6"/><circle cx="14.7" cy="19.4" r="0.6"/><circle cx="18.2" cy="18.8" r="0.6"/><circle cx="21.7" cy="18.2" r="0.6"/></g><path d="M19 15.5H23" stroke="#4a88d8" stroke-width="1"/><circle cx="5.5" cy="19" r="4.5" fill="#eef2f4" fill-opacity="0.8" stroke="#9aa4ae" stroke-width="1"/><path d="M8.5 22L12 26.5" stroke="#666" stroke-width="1.8"/></svg>
<svg style="position:absolute;left:594px;top:246px;opacity:0.6" width="29" height="30" viewBox="0 0 29 30"><defs><radialGradient id="ck" cx="0.5" cy="0.4" r="0.6"><stop offset="0.7" stop-color="#e8f0f6"/><stop offset="1" stop-color="#9ec0da"/></radialGradient><radialGradient id="cf" cx="0.5" cy="0.35" r="0.7"><stop offset="0" stop-color="#ffffff"/><stop offset="1" stop-color="#dfe9f2"/></radialGradient></defs><ellipse cx="14.5" cy="28.5" rx="9" ry="1" fill="#e4e4e4"/><circle cx="14.5" cy="14" r="13.2" fill="url(#ck)" stroke="#b4cde0" stroke-width="0.8"/><circle cx="14.5" cy="14" r="10.5" fill="url(#cf)" stroke="#c4d6e6" stroke-width="0.6"/><path d="M14.5 6V14L9.5 17.3" fill="none" stroke="#333" stroke-width="1.2"/></svg>
<svg style="position:absolute;left:664px;top:246px;opacity:0.65" width="31" height="30" viewBox="0 0 31 30"><ellipse cx="14" cy="28.5" rx="9" ry="1" fill="#e4e4e4"/><circle cx="13.5" cy="14" r="13" fill="url(#ck)" stroke="#b4cde0" stroke-width="0.8"/><circle cx="13.5" cy="14" r="10.3" fill="url(#cf)" stroke="#c4d6e6" stroke-width="0.6"/><path d="M13.5 6V14L9 17.3" fill="none" stroke="#333" stroke-width="1.2"/><path d="M18 29.5Q18.5 22 24.5 21.5Q30.5 22 31 29.5Z" fill="#3a3a3a"/><circle cx="24.5" cy="18.3" r="3.6" fill="#d4a484"/><path d="M18.5 13L24.5 10.8L30.5 13L24.5 15.2Z" fill="#222"/><path d="M21 14V16H28V14" fill="#333"/></svg>
<svg style="position:absolute;left:732px;top:246px;opacity:0.55" width="31" height="31" viewBox="0 0 31 31"><path d="M4 14L22 9L29 19L12 24Z" fill="#b03030"/><path d="M10 22L28 18V21L11 25Z" fill="#d8dde6"/><path d="M6 3H10V9L13 15H3L6 9Z" fill="#9ac8e8"/><circle cx="17" cy="17" r="4" fill="none" stroke="#666" stroke-width="1.3"/><path d="M14 20L9 28" stroke="#666" stroke-width="1.6"/></svg>
<svg style="position:absolute;left:803px;top:246px;opacity:0.6" width="30" height="31" viewBox="0 0 30 31"><rect x="8" y="1" width="14" height="9" fill="#fafafa" stroke="#999" stroke-width="0.8"/><rect x="1" y="9" width="28" height="12" rx="2" fill="#c8cbd0"/><rect x="1" y="9" width="28" height="5" rx="2" fill="#e0e2e6"/><rect x="8" y="17" width="14" height="13" fill="#fff" stroke="#8a9aaa" stroke-width="0.8"/><rect x="10" y="21" width="10" height="6" fill="#8ec0e8"/></svg>
<svg style="position:absolute;left:873px;top:248px;opacity:0.6" width="31" height="27" viewBox="0 0 31 27"><rect x="1" y="1" width="29" height="24" fill="#f2ecd0" stroke="#9c9460" stroke-width="1.4"/><rect x="3.5" y="3.5" width="24" height="19" fill="#fbf9ee" stroke="#d8d0a0" stroke-width="0.6"/><path d="M9 7Q15.5 4.5 22 7" fill="none" stroke="#555" stroke-width="1.3"/><ellipse cx="15.5" cy="14" rx="8" ry="5" fill="#f4ecb8"/><path d="M8 12H23M8 15H23M10 18H21" stroke="#e0d088" stroke-width="0.8"/><circle cx="5.8" cy="17.5" r="1.6" fill="#e89030"/><path d="M5 19L4.5 22M6.6 19L7 22" stroke="#4a88d0" stroke-width="1"/></svg>
</body></html>
